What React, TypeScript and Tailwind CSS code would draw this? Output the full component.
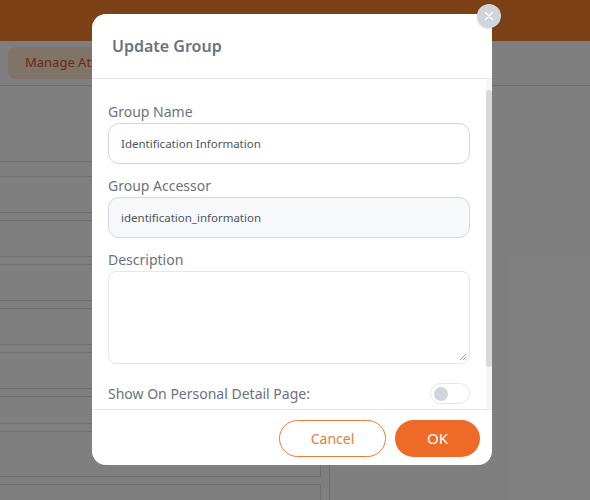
import React from 'react';

const font = { fontFamily: '"Noto Sans", "Open Sans", sans-serif' };

function BackgroundPage() {
  const rows = ['h-[37px]', 'h-[37px]', 'h-[37px]', 'h-[37px]', 'h-[37px]', 'h-[28px]', 'h-[46px]'];
  return (
    <div className="h-[500px] w-[590px] bg-white overflow-hidden">
      <div className="h-[41px] bg-[#f8832e]" />
      <div className="h-[45px] flex items-center px-2 border-b border-[#dedede]">
        <button className="h-8 px-[17px] rounded-lg bg-[#ffe9cf] text-[13px] text-[#e0502c]">
          Manage Attributes
        </button>
      </div>
      <div className="flex">
        <div className="w-[321px]">
          <div className="h-[76px] border-b border-[#dddddd]" />
          <div className="mt-[14px] flex flex-col gap-[7px]">
            {rows.map((h, i) => (
              <div key={i} className={`${h} border-y border-r border-[#dddddd]`} />
            ))}
            <div className="h-[30px] border-t border-r border-[#dddddd] flex items-end justify-end gap-2 pr-4 pb-0.5">
              <span className="w-2 h-2 bg-[#555] rounded-sm" />
              <span className="w-2 h-2 bg-[#555] rounded-sm" />
            </div>
          </div>
        </div>
        <div className="w-[8px]" />
        <div className="flex-1 border-l border-[#dddddd]" />
      </div>
    </div>
  );
}

function Field({ label, value, muted }: { label: string; value: string; muted?: boolean }) {
  return (
    <div>
      <div className="text-[14px] leading-[18px] text-[#6b7280]">{label}</div>
      <div
        className={`mt-[2px] h-[41px] rounded-[11px] border border-[#cfd8e3] flex items-center pl-[12px] text-[11.5px] text-[#4b5563] ${
          muted ? 'bg-[#f7f8fa]' : 'bg-white'
        }`}
      >
        {value}
      </div>
    </div>
  );
}

export default function App() {
  return (
    <div className="relative w-[590px] h-[500px] overflow-hidden" style={font}>
      <BackgroundPage />
      <div className="absolute inset-0 bg-black/50">
        <div className="relative ml-[92px] mt-[14px] w-[400px] h-[451px] bg-white rounded-[14px] flex flex-col">
          <div className="h-[65px] flex items-center px-5 border-b border-[#e5e7eb]">
            <h2 className="text-[16px] font-semibold text-[#6b7280]">Update Group</h2>
          </div>
          <div className="h-[331px] flex border-b border-[#e5e7eb]">
            <div className="flex-1 pl-4 pr-4 pt-[24px]">
              <Field label="Group Name" value="Identification Information" />
              <div className="mt-[13px]">
                <Field label="Group Accessor" value="identification_information" muted />
              </div>
              <div className="mt-[13px]">
                <div className="text-[14px] leading-[18px] text-[#6b7280]">Description</div>
                <div className="relative mt-[2px] h-[93px] rounded-lg border border-[#e5e7eb]">
                  <svg className="absolute right-[2px] bottom-[2px]" width="8" height="8" viewBox="0 0 8 8">
                    <path d="M7 1L1 7M7 4L4 7M7 6.5L6.5 7" stroke="#888" strokeWidth="0.8" />
                  </svg>
                </div>
              </div>
              <div className="mt-[19px] flex items-center justify-between">
                <span className="text-[14px] leading-5 text-[#6b7280]">Show On Personal Detail Page:</span>
                <div className="w-10 h-[21px] rounded-full border border-[#e5e7eb] flex items-center pl-[3px]">
                  <span className="w-[14px] h-[14px] rounded-full bg-[#d1d5db]" />
                </div>
              </div>
            </div>
            <div className="w-[6px] bg-[#f7f7f7] pt-[11px]">
              <div className="h-[277px] rounded-full bg-[#d9d9d9]" />
            </div>
          </div>
          <div className="flex-1 flex items-start justify-end gap-[9px] pr-3 pt-[10px]">
            <button className="w-[107px] h-[37px] rounded-full border border-[#f07a36] text-[#f07a36] text-[14px]">
              Cancel
            </button>
            <button className="w-[85px] h-[37px] rounded-full bg-[#ee6a26] text-white text-[15px]">
              OK
            </button>
          </div>
          <button className="absolute -right-[9px] -top-[10px] w-6 h-6 rounded-full bg-[#d1d5db] shadow flex items-center justify-center">
            <svg width="10" height="10" viewBox="0 0 10 10">
              <path d="M1.5 1.5L8.5 8.5M8.5 1.5L1.5 8.5" stroke="white" strokeWidth="1.4" strokeLinecap="round" />
            </svg>
          </button>
        </div>
      </div>
    </div>
  );
}
